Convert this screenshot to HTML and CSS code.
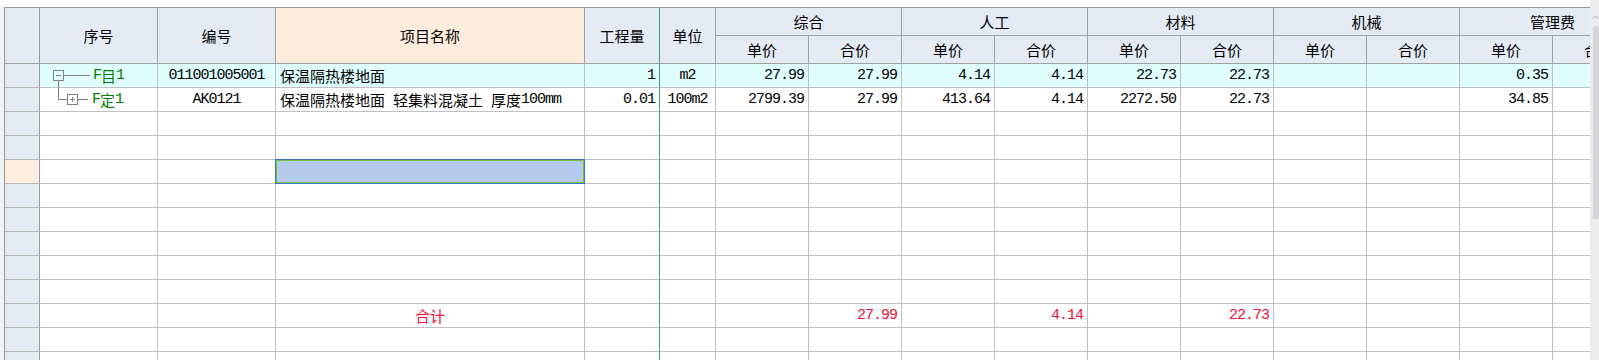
FILE: index.html
```html
<!DOCTYPE html>
<html lang="zh-CN">
<head>
<meta charset="utf-8">
<title>清单</title>
<link rel="stylesheet" href="styles.css">
</head>
<body>
<div class="app">
  <div class="gutter"></div>
  <div class="viewport">
    <div class="sheet">
      <div class="head">
        <div class="h r2 rh"></div>
        <div class="h r2">序号</div>
        <div class="h r2">编号</div>
        <div class="h r2 nameh">项目名称</div>
        <div class="h r2 q">工程量</div>
        <div class="h r2">单位</div>
        <div class="h s2">综合</div>
        <div class="h s2">人工</div>
        <div class="h s2">材料</div>
        <div class="h s2">机械</div>
        <div class="h s2">管理费</div>
        <div class="h">单价</div><div class="h">合价</div>
        <div class="h">单价</div><div class="h">合价</div>
        <div class="h">单价</div><div class="h">合价</div>
        <div class="h">单价</div><div class="h">合价</div>
        <div class="h">单价</div><div class="h">合价</div>
      </div>

      <div class="row hl">
        <div class="c rh"></div>
        <div class="c tree">
          <svg class="tw" width="53" height="23" viewBox="0 0 53 23">
            <rect x="13.5" y="6.5" width="10" height="10" fill="none" stroke="#808080"/>
            <path d="M16 11.5H21M24 11.5H50M18.5 17V24" stroke="#808080" fill="none"/>
          </svg>
          <span class="m">F</span>目<span class="m">1</span>
        </div>
        <div class="c n ct">011001005001</div>
        <div class="c nm">保温隔热楼地面</div>
        <div class="c n q">1</div>
        <div class="c n ct">m2</div>
        <div class="c n">27.99</div>
        <div class="c n">27.99</div>
        <div class="c n">4.14</div>
        <div class="c n">4.14</div>
        <div class="c n">22.73</div>
        <div class="c n">22.73</div>
        <div class="c n"></div>
        <div class="c n"></div>
        <div class="c n">0.35</div>
        <div class="c n"></div>
      </div>

      <div class="row">
        <div class="c rh"></div>
        <div class="c tree">
          <svg class="tw" width="52" height="23" viewBox="0 0 52 23">
            <path d="M18.5 -1V11.5M18 11.5H27M38 11.5H48" stroke="#808080" fill="none"/>
            <rect x="27.5" y="6.5" width="10" height="10" fill="none" stroke="#808080"/>
            <path d="M30 11.5H35M32.5 9V14" stroke="#808080" fill="none"/>
          </svg>
          <span class="m">F</span>定<span class="m">1</span>
        </div>
        <div class="c n ct">AK0121</div>
        <div class="c nm">保温隔热楼地面<span class="m">&nbsp;</span>轻集料混凝土<span class="m">&nbsp;</span>厚度<span class="m">100mm</span></div>
        <div class="c n q">0.01</div>
        <div class="c n ct">100m2</div>
        <div class="c n">2799.39</div>
        <div class="c n">27.99</div>
        <div class="c n">413.64</div>
        <div class="c n">4.14</div>
        <div class="c n">2272.50</div>
        <div class="c n">22.73</div>
        <div class="c n"></div>
        <div class="c n"></div>
        <div class="c n">34.85</div>
        <div class="c n"></div>
      </div>

      <div class="row">
        <div class="c rh"></div><div class="c"></div><div class="c"></div><div class="c"></div><div class="c q"></div>
        <div class="c"></div><div class="c"></div><div class="c"></div><div class="c"></div><div class="c"></div><div class="c"></div><div class="c"></div><div class="c"></div><div class="c"></div><div class="c"></div><div class="c"></div>
      </div>
      <div class="row">
        <div class="c rh"></div><div class="c"></div><div class="c"></div><div class="c"></div><div class="c q"></div>
        <div class="c"></div><div class="c"></div><div class="c"></div><div class="c"></div><div class="c"></div><div class="c"></div><div class="c"></div><div class="c"></div><div class="c"></div><div class="c"></div><div class="c"></div>
      </div>
      <div class="row">
        <div class="c rh selrh"></div><div class="c"></div><div class="c"></div><div class="c sel"></div><div class="c q"></div>
        <div class="c"></div><div class="c"></div><div class="c"></div><div class="c"></div><div class="c"></div><div class="c"></div><div class="c"></div><div class="c"></div><div class="c"></div><div class="c"></div><div class="c"></div>
      </div>
      <div class="row">
        <div class="c rh"></div><div class="c"></div><div class="c"></div><div class="c"></div><div class="c q"></div>
        <div class="c"></div><div class="c"></div><div class="c"></div><div class="c"></div><div class="c"></div><div class="c"></div><div class="c"></div><div class="c"></div><div class="c"></div><div class="c"></div><div class="c"></div>
      </div>
      <div class="row">
        <div class="c rh"></div><div class="c"></div><div class="c"></div><div class="c"></div><div class="c q"></div>
        <div class="c"></div><div class="c"></div><div class="c"></div><div class="c"></div><div class="c"></div><div class="c"></div><div class="c"></div><div class="c"></div><div class="c"></div><div class="c"></div><div class="c"></div>
      </div>
      <div class="row">
        <div class="c rh"></div><div class="c"></div><div class="c"></div><div class="c"></div><div class="c q"></div>
        <div class="c"></div><div class="c"></div><div class="c"></div><div class="c"></div><div class="c"></div><div class="c"></div><div class="c"></div><div class="c"></div><div class="c"></div><div class="c"></div><div class="c"></div>
      </div>
      <div class="row">
        <div class="c rh"></div><div class="c"></div><div class="c"></div><div class="c"></div><div class="c q"></div>
        <div class="c"></div><div class="c"></div><div class="c"></div><div class="c"></div><div class="c"></div><div class="c"></div><div class="c"></div><div class="c"></div><div class="c"></div><div class="c"></div><div class="c"></div>
      </div>
      <div class="row">
        <div class="c rh"></div><div class="c"></div><div class="c"></div><div class="c"></div><div class="c q"></div>
        <div class="c"></div><div class="c"></div><div class="c"></div><div class="c"></div><div class="c"></div><div class="c"></div><div class="c"></div><div class="c"></div><div class="c"></div><div class="c"></div><div class="c"></div>
      </div>

      <div class="row total">
        <div class="c rh"></div><div class="c"></div><div class="c"></div>
        <div class="c ct red">合计</div>
        <div class="c q"></div>
        <div class="c"></div>
        <div class="c n"></div>
        <div class="c n red">27.99</div>
        <div class="c n"></div>
        <div class="c n red">4.14</div>
        <div class="c n"></div>
        <div class="c n red">22.73</div>
        <div class="c"></div><div class="c"></div><div class="c"></div><div class="c"></div>
      </div>

      <div class="row">
        <div class="c rh"></div><div class="c"></div><div class="c"></div><div class="c"></div><div class="c q"></div>
        <div class="c"></div><div class="c"></div><div class="c"></div><div class="c"></div><div class="c"></div><div class="c"></div><div class="c"></div><div class="c"></div><div class="c"></div><div class="c"></div><div class="c"></div>
      </div>
      <div class="row">
        <div class="c rh"></div><div class="c"></div><div class="c"></div><div class="c"></div><div class="c q"></div>
        <div class="c"></div><div class="c"></div><div class="c"></div><div class="c"></div><div class="c"></div><div class="c"></div><div class="c"></div><div class="c"></div><div class="c"></div><div class="c"></div><div class="c"></div>
      </div>
    </div>
  </div>
  <div class="vscroll">
    <svg class="arrow" width="9" height="6" viewBox="0 0 9 6"><path d="M3 4.5L5.5 2L8 4.5" stroke="#a8a8a8" fill="none"/></svg>
    <div class="thumb"></div>
  </div>
</div>
</body>
</html>
```

FILE: styles.css
```css
* {
  box-sizing: border-box;
  margin: 0;
  padding: 0;
}

body {
  margin: 0;
  background: #ffffff;
  font-family: "Noto Sans CJK SC", sans-serif;
  font-size: 15px;
  color: #000000;
}

.app {
  display: flex;
  height: 360px;
  overflow: hidden;
}

.gutter {
  width: 4px;
  flex: none;
  margin-top: 7px;
  background: #f2f3f5;
}

.viewport {
  width: 1586px;
  flex: none;
  margin-top: 7px;
  overflow: hidden;
}

.sheet {
  width: max-content;
  border-left: 1px solid #999999;
  border-top: 1px solid #999999;
}

.head,
.row {
  display: grid;
  grid-template-columns: 35px 118px 118px 309px 75px 56px repeat(10, 93px);
}

.head {
  grid-template-rows: 28px 28px;
}

.row {
  height: 24px;
}

.h {
  background: #e4ebf5;
  border-right: 1px solid #a0a0a0;
  border-bottom: 1px solid #a0a0a0;
  display: flex;
  align-items: center;
  justify-content: center;
  white-space: nowrap;
}

.r2 {
  grid-row: span 2;
}

.s2 {
  grid-column: span 2;
}

.nameh {
  background: #feeddd;
}

.c {
  border-right: 1px solid #c0c0c0;
  border-bottom: 1px solid #c0c0c0;
  display: flex;
  align-items: center;
  white-space: nowrap;
  min-width: 0;
}

.rh {
  background: #e4ebf5;
  border-right-color: #9a9a9a;
}

.c.rh {
  border-bottom-color: #b8b8b8;
}

.q {
  border-right-color: #30a67a;
}

.n {
  justify-content: flex-end;
  padding-right: 4px;
  font-family: "Liberation Mono", monospace;
  font-size: 15px;
  letter-spacing: -1px;
}

.ct {
  justify-content: center;
  padding-right: 0;
}

.nm {
  padding-left: 4px;
}

.m {
  font-family: "Liberation Mono", monospace;
  font-size: 15px;
  letter-spacing: -1px;
}

.hl .c {
  background: #e0fefe;
}

.hl .c.rh {
  background: #e4ebf5;
}

.red {
  color: #f0103c;
}

.tree {
  color: #008000;
}

.tw {
  flex: none;
  overflow: visible;
  display: block;
}

.sel {
  position: relative;
  background: #b5cbeb;
}

.sel::after {
  content: "";
  position: absolute;
  inset: -1px;
  border: 1px solid #3b73c5;
  box-shadow: inset 0 0 0 1px #79c143;
}

.c.selrh {
  background: #feeedf;
}

.vscroll {
  width: 9px;
  flex: none;
  background: #ececef;
  display: flex;
  flex-direction: column;
  padding-top: 14px;
}

.arrow {
  display: block;
  flex: none;
}

.thumb {
  margin-top: 6px;
  margin-left: 3px;
  width: 6px;
  height: 193px;
  background: #d6d6da;
  border-radius: 3px 3px 0 0;
}
```
